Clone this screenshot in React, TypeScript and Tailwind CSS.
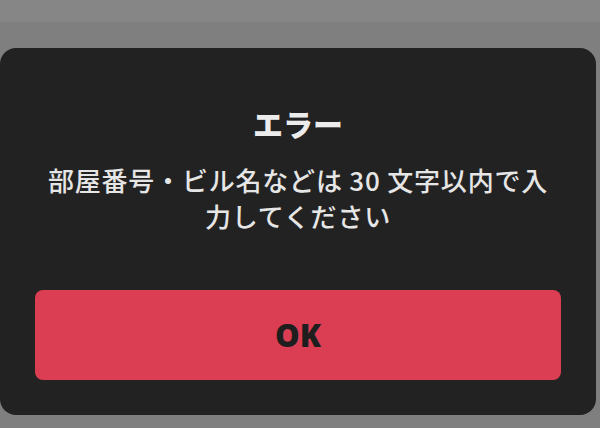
export default function App() {
  return (
    <div className="w-[600px] h-[428px] overflow-hidden bg-[#7f7f7f] font-['Noto_Sans_CJK_JP',sans-serif]">
      {/* 背景の上の帯 */}
      <div className="h-[22px] bg-[#868686]" />
      <div className="pt-[26px] pr-[4px]">
        <div className="h-[367px] rounded-[16px] bg-[#222222] px-[35px] pt-[57px]">
          <h2 className="text-center text-[30px] leading-[36px] font-black text-[#ececec]">
            エラー
          </h2>
          <p className="mt-[21px] text-center text-[26px] leading-[36px] tracking-[0.8px] font-medium text-[#e6e6e6]">
            部屋番号・ビル名などは 30 文字以内で入
            <br />
            力してください
          </p>
          <button className="mt-[56px] flex h-[90px] w-full items-center justify-center rounded-[8px] bg-[#db3e52] text-[31px] font-black text-[#1e1e1e] font-['Noto_Sans',sans-serif]">
            OK
          </button>
        </div>
      </div>
    </div>
  );
}
